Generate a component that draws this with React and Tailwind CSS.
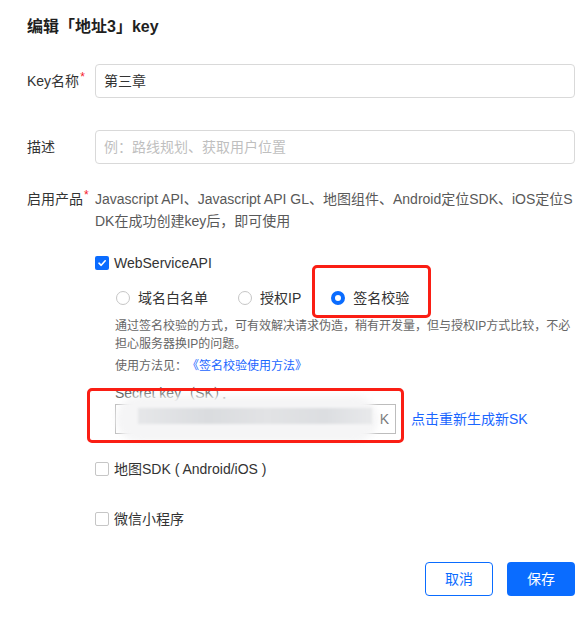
import React from 'react';

const FONT = { fontFamily: '"Liberation Sans", "Noto Sans CJK SC", sans-serif' };

function Required() {
    return <span className="text-[#f5222d] text-[12px] leading-none relative -top-[5px] ml-[1px]">*</span>;
}

function Checkbox({ checked }) {
    if (checked) {
        return (
            <span className="w-[14px] h-[14px] rounded-[2px] bg-[#0a6cff] flex items-center justify-center shrink-0">
                <svg width="10" height="10" viewBox="0 0 10 10" fill="none">
                    <path d="M2 5.2 L4.2 7.3 L8.2 2.8" stroke="white" strokeWidth="1.6" strokeLinecap="round" strokeLinejoin="round" />
                </svg>
            </span>
        );
    }
    return <span className="w-[14px] h-[14px] rounded-[2px] border border-[#c6c6c6] bg-white shrink-0" />;
}

function Radio({ checked, label }) {
    return (
        <label className="flex items-center gap-[8px]">
            {checked
                ? <span className="w-[14px] h-[14px] rounded-full border-[4px] border-[#0a6cff] bg-white shrink-0" />
                : <span className="w-[14px] h-[14px] rounded-full border border-[#c6c6c6] bg-white shrink-0" />
            }
            <span className="text-[14px] text-[#333]">{label}</span>
        </label>
    );
}

export default function App() {
    return (
        <div className="relative w-[585px] h-[624px] bg-white pl-[27px] pr-[10px] text-[#333] overflow-hidden" style={FONT}>
            <h2 className="pt-[15px] text-[16px] leading-[24px] font-bold text-[#1f1f1f]">编辑「地址3」key</h2>

            <div className="mt-[25px] flex items-center">
                <div className="w-[68px] text-[14px]">Key名称<Required /></div>
                <div className="flex-1 h-[34px] border border-[#d9d9d9] rounded-[4px] px-[8px] flex items-center text-[14px] text-[#333]">第三章</div>
            </div>

            <div className="mt-[32px] flex items-center">
                <div className="w-[68px] text-[14px]">描述</div>
                <div className="flex-1 h-[34px] border border-[#d9d9d9] rounded-[4px] px-[8px] flex items-center text-[14px] text-[#bfbfbf]">例：路线规划、获取用户位置</div>
            </div>

            <div className="mt-[24px] flex items-start">
                <div className="w-[68px] text-[14px] leading-[22px]">启用产品<Required /></div>
                <div className="flex-1">
                    <p className="text-[14px] leading-[22px] text-[#595959] whitespace-nowrap">
                        Javascript API、Javascript API GL、地图组件、Android定位SDK、iOS定位S<br />
                        DK在成功创建key后，即可使用
                    </p>

                    <div className="mt-[20px] flex items-center gap-[5px] h-[22px]">
                        <Checkbox checked />
                        <span className="text-[14px] text-[#333]">WebServiceAPI</span>
                    </div>

                    <div className="mt-[13px] pl-[21px] flex items-center gap-[30px] h-[22px]">
                        <Radio label="域名白名单" />
                        <Radio label="授权IP" />
                        <Radio checked label="签名校验" />
                    </div>

                    <div className="pl-[20px]">
                        <p className="mt-[8px] text-[12px] leading-[18px] text-[#666] whitespace-nowrap">
                            通过签名校验的方式，可有效解决请求伪造，稍有开发量，但与授权IP方式比较，不必<br />
                            担心服务器换IP的问题。
                        </p>
                        <p className="mt-[4px] text-[12px] leading-[18px] text-[#666]">
                            使用方法见：<a className="ml-[6px] text-[#1a66ff]">《签名校验使用方法》</a>
                        </p>
                        <p className="mt-[9px] text-[14px] leading-[18px] text-[#666]">Secret key（SK）：</p>
                        <div className="mt-[2px] flex items-center gap-[15px]">
                            <div className="w-[281px] h-[30px] border border-[#bdbdbd] flex items-center justify-end pr-[6px] text-[14px] text-[#777]">K</div>
                            <a className="text-[14px] text-[#1a66ff]">点击重新生成新SK</a>
                        </div>
                    </div>

                    <div className="mt-[24px] flex items-center gap-[5px] h-[22px]">
                        <Checkbox />
                        <span className="text-[14px] text-[#333]">地图SDK ( Android/iOS )</span>
                    </div>

                    <div className="mt-[28px] flex items-center gap-[5px] h-[22px]">
                        <Checkbox />
                        <span className="text-[14px] text-[#333]">微信小程序</span>
                    </div>
                </div>
            </div>

            <div className="mt-[32px] flex justify-end gap-[14px]">
                <button className="w-[68px] h-[34px] rounded-[4px] border border-[#0a6cff] text-[#0a6cff] text-[14px] bg-white">取消</button>
                <button className="w-[68px] h-[34px] rounded-[4px] bg-[#0a6cff] text-white text-[14px]">保存</button>
            </div>

            {/* blurred secret */}
            <div className="absolute left-[116px] top-[396px] w-[262px] h-[46px] rounded-[23px] bg-[#f5f5f6] blur-[3px]" />
            <div className="absolute left-[138px] top-[408px] w-[234px] h-[16px] bg-[linear-gradient(90deg,#e6e7e9,#dadcdf_30%,#e2e3e5_55%,#dcdee1_80%,#e8e9eb)] blur-[1px]" />

            {/* annotations */}
            <div className="absolute left-[312px] top-[265px] w-[119px] h-[53px] border-[3px] border-[#fa1e14] rounded-[5px]" />
            <div className="absolute left-[87px] top-[388px] w-[317px] h-[55px] border-[3px] border-[#fa1e14] rounded-[5px]" />
        </div>
    );
}
